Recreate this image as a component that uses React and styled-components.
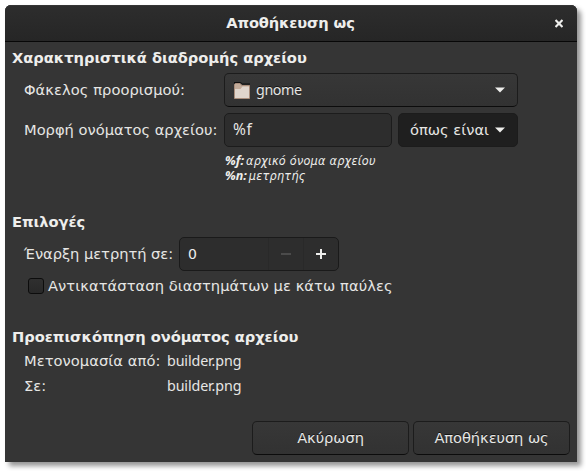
import React from 'react';
import styled, { createGlobalStyle } from 'styled-components';

const Global = createGlobalStyle`
  * { box-sizing: border-box; }
  body { margin: 0; background: #fff; color: #eeeeec; font: 14.67px/20px "DejaVu Sans", sans-serif; }
`;

const Page = styled.div`
  height: 471px;
  padding: 5px 9px 9px 5px;
  overflow: hidden;
`;
const Dialog = styled.main`
  width: 572px;
  height: 457px;
  background: #353535;
  border-radius: 6px 6px 0 0;
  box-shadow: 4px 4px 5px rgba(0, 0, 0, 0.42);
  white-space: nowrap;
`;
const Header = styled.header`
  height: 37px;
  display: grid;
  grid-template-columns: 35px 1fr 36px;
  align-items: center;
  border-radius: 6px 6px 0 0;
  border-bottom: 1px solid #070707;
  background: linear-gradient(#2d2d2d, #262626);
  box-shadow: inset 0 1px #353535;
`;
const Title = styled.h1`
  grid-column: 2;
  margin: 0;
  text-align: center;
  font-size: 14.67px;
  line-height: 20px;
  letter-spacing: -0.15px;
`;
const Close = styled.button`
  height: 24px;
  padding: 0;
  display: grid;
  place-items: center;
  border: 0;
  background: none;
  color: #eeeeec;
`;
const Content = styled.div`
  height: 420px;
  padding: 6px 7px 7px;
  display: flex;
  flex-direction: column;
`;
const Heading = styled.h2`
  margin: ${p => p.$top || 0}px 0 0;
  height: 20px;
  font-size: 14.67px;
  line-height: 20px;
  letter-spacing: -0.03px;
`;
const Row = styled.div`
  display: flex;
  align-items: center;
  height: ${p => p.$height || 34}px;
  margin-top: ${p => p.$top || 0}px;
  padding-left: 12px;
`;
const Label = styled.label`
  width: ${p => p.$width}px;
  flex: none;
  color: #e6e6e4;
  letter-spacing: ${p => p.$track || 0}px;
`;
const Latin = styled.span`
  color: #e6e6e4;
  font: ${p => p.$size || 14.3}px/20px "Noto Sans", sans-serif;
  letter-spacing: ${p => p.$track ?? -0.13}px;
`;
const Combo = styled.button`
  width: 294px;
  height: 34px;
  display: flex;
  align-items: center;
  gap: 6px;
  padding: 0 12px 0 9px;
  color: inherit;
  border: 1px solid #1c1c1c;
  border-bottom-color: #0c0c0c;
  border-radius: 5px;
  background: linear-gradient(#373737, #323232);
  text-shadow: 0 -1px #151515;
  & > svg:last-child { margin-left: auto; }
`;
const Entry = styled.div`
  width: 168px;
  height: 34px;
  padding: 5px 8px;
  border: 1px solid #1c1c1c;
  border-radius: 5px;
  background: #2d2d2d;
`;
const FormatButton = styled.button`
  width: 120px;
  height: 34px;
  margin-left: 6px;
  padding: 0 12px 0 11px;
  display: flex;
  align-items: center;
  justify-content: space-between;
  border: 1px solid #1c1c1c;
  border-radius: 5px;
  background: #1f1f1f;
  color: #e6e6e4;
  font: 14.67px/20px "DejaVu Sans", sans-serif;
`;
const Hint = styled.div`
  height: 30px;
  margin: 6px 0 0 212px;
`;
const HintLine = styled.div`
  display: flex;
  gap: 2px;
  height: 15px;
  padding-left: 1px;
  font: italic 12.5px/15px "DejaVu Sans Condensed", "DejaVu Sans", sans-serif;
  font-stretch: condensed;
  letter-spacing: 0.25px;
  & b { font: italic bold 12.5px/15px "Noto Sans", sans-serif; letter-spacing: 0; }
`;
const Spin = styled.div`
  display: grid;
  grid-template-columns: 88px 35px 35px;
  height: 34px;
  border: 1px solid #1a1a1a;
  border-radius: 5px;
  background: #2d2d2d;
`;
const SpinValue = styled.span`
  padding: 6px 8px;
  font-size: 14px;
`;
const Step = styled.button`
  display: grid;
  place-items: center;
  padding: 0;
  border: 0;
  border-left: 1px solid #292929;
  background: none;
  color: ${p => (p.disabled ? '#4b4b4b' : '#eeeeec')};
`;
const Check = styled.span`
  width: 16px;
  height: 16px;
  margin: 0 4px;
  flex: none;
  border: 1px solid #0c0c0c;
  border-radius: 3px;
  background: linear-gradient(#2f2f2f, #282828);
`;
const Footer = styled.footer`
  display: flex;
  justify-content: flex-end;
  gap: 4px;
  margin-top: auto;
`;
const Action = styled.button`
  width: 157px;
  height: 34px;
  padding: 0;
  color: #e6e6e4;
  font: 14.67px/20px "DejaVu Sans", sans-serif;
  letter-spacing: -0.08px;
  border: 1px solid #1c1c1c;
  border-bottom-color: #0c0c0c;
  border-radius: 5px;
  background: linear-gradient(#373737, #323232);
  text-shadow: 0 -1px #151515;
`;

const Arrow = () => (
  <svg width="10" height="6" viewBox="0 0 10 6"><path d="M0 .5H10L5 5.5Z" fill="#eeeeec" /></svg>
);
const Folder = () => (
  <svg width="16" height="17" viewBox="0 0 16 17">
    <path d="M0 1.5V.5h6.5l2 1.5H16" stroke="#0c0c0c" fill="none" />
    <path d="M.5 16.5V2.5L1.5 1.5H6L8 3.5H15.5V16.5Z" fill="#c2aa99" stroke="#a98d7b" />
    <path d="M1 16V7H6.5L8.5 4.5H15V16Z" fill="#e0d5cc" />
  </svg>
);

export default function App() {
  return (
    <Page>
      <Global />
      <Dialog>
        <Header>
          <Title>Αποθήκευση ως</Title>
          <Close aria-label="Κλείσιμο">
            <svg width="8" height="9" viewBox="0 0 8 9" stroke="currentColor" strokeWidth="2.2"><path d="M.5 1L7.5 8M7.5 1L.5 8" /></svg>
          </Close>
        </Header>
        <Content>
          <Heading>Χαρακτηριστικά διαδρομής αρχείου</Heading>
          <Row $top={5}>
            <Label $width={200} $track={0.06}>Φάκελος προορισμού:</Label>
            <Combo><Folder /><Latin $track={-0.4}>gnome</Latin><Arrow /></Combo>
          </Row>
          <Row $top={6}>
            <Label $width={200}>Μορφή ονόματος αρχείου:</Label>
            <Entry><Latin $size={15.5} $track={0.5}>%f</Latin></Entry>
            <FormatButton>όπως είναι<Arrow /></FormatButton>
          </Row>
          <Hint>
            <HintLine><b>%f:</b><span>αρχικό όνομα αρχείου</span></HintLine>
            <HintLine><b>%n:</b><span>μετρητής</span></HintLine>
          </Hint>
          <Heading $top={29}>Επιλογές</Heading>
          <Row $top={5}>
            <Label $width={155} $track={-0.04}>Έναρξη μετρητή σε:</Label>
            <Spin>
              <SpinValue>0</SpinValue>
              <Step disabled aria-label="Μείωση"><svg width="10" height="2"><path d="M0 1H10" stroke="currentColor" strokeWidth="2" /></svg></Step>
              <Step aria-label="Αύξηση"><svg width="10" height="10"><path d="M0 5H10M5 0V10" stroke="currentColor" strokeWidth="2" /></svg></Step>
            </Spin>
          </Row>
          <Row $top={5} $height={20}><Check /><Label $track={0.07}>Αντικατάσταση διαστημάτων με κάτω παύλες</Label></Row>
          <Heading $top={31}>Προεπισκόπηση ονόματος αρχείου</Heading>
          <Row $top={3} $height={22}><Label $width={143} $track={0.06}>Μετονομασία από:</Label><Latin>builder.png</Latin></Row>
          <Row $top={3} $height={22}><Label $width={143}>Σε:</Label><Latin>builder.png</Latin></Row>
          <Footer><Action>Ακύρωση</Action><Action>Αποθήκευση ως</Action></Footer>
        </Content>
      </Dialog>
    </Page>
  );
}
